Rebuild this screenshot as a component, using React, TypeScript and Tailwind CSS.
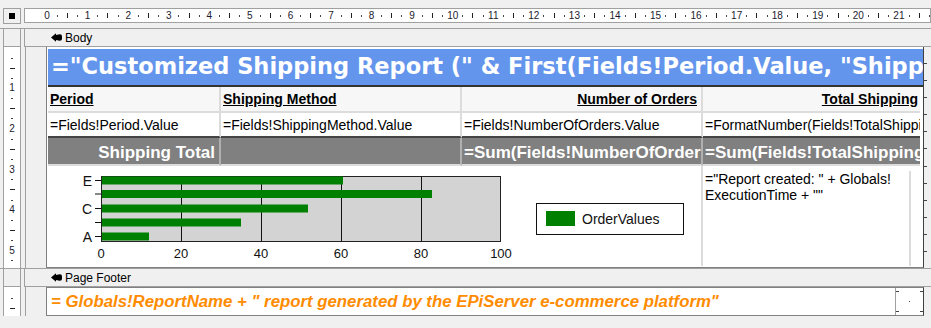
import React from 'react'

type Mark = { kind: 'num' | 'dot' | 'tick'; label?: number }

const topMarks: Mark[] = []
for (let n = 0; n <= 22; n++) {
  topMarks.push({ kind: 'num', label: n }, { kind: 'dot' }, { kind: 'tick' }, { kind: 'dot' })
}

const sideMarks: Mark[] = []
for (let n = 0; n <= 5; n++) {
  if (n > 0) sideMarks.push({ kind: 'num', label: n })
  sideMarks.push({ kind: 'dot' }, { kind: 'tick' }, { kind: 'dot' })
}

function TopMark({ kind, label }: Mark) {
  return (
    <div className="flex h-full w-[10.15px] shrink-0 items-center justify-center">
      {kind === 'num' && <span className="text-[10px] leading-none text-[#1a1a2e]">{label}</span>}
      {kind === 'dot' && <span className="h-[2px] w-px bg-[#444]" />}
      {kind === 'tick' && <span className="h-[5px] w-px bg-[#222]" />}
    </div>
  )
}

function SideMark({ kind, label }: Mark) {
  return (
    <div className="flex h-[10.15px] w-full shrink-0 items-center justify-center">
      {kind === 'num' && <span className="text-[10px] leading-none text-[#1a1a2e]">{label}</span>}
      {kind === 'dot' && <span className="h-px w-[2px] bg-[#444]" />}
      {kind === 'tick' && <span className="h-px w-[5px] bg-[#222]" />}
    </div>
  )
}

function SectionIcon() {
  return (
    <svg width="11" height="9" viewBox="0 0 11 9" className="mr-[3px]">
      <path d="M0 4.5 L5 0.3 L5 2 L8.6 1.2 Q11 1 11 3.2 L11 5.8 Q11 8 8.6 7.8 L5 7 L5 8.7 Z" fill="#000" />
    </svg>
  )
}

function SectionHeader({ title }: { title: string }) {
  return (
    <div className="flex h-[19px] border-t border-[#a0a0a0]">
      <div className="ml-[3px] w-[18px] border-x border-b border-[#a0a0a0] bg-[#f0f0f0]" />
      <div className="ml-[3px] flex flex-1 items-center border-l border-b border-[#a0a0a0] bg-[#f0f0f0] pl-[26px] text-[12px] text-black">
        <SectionIcon />
        {title}
      </div>
    </div>
  )
}

const bars = [
  { y: 10.5, w: 241 },
  { y: 24, w: 330 },
  { y: 38.5, w: 206 },
  { y: 52.5, w: 139 },
  { y: 66.5, w: 47 },
]

function OrderChart() {
  return (
    <svg width="655" height="101" viewBox="0 0 655 101" className="block">
      <rect x="53.5" y="10.5" width="399" height="65" fill="#d3d3d3" stroke="#222" />
      {[133.5, 213.5, 293.5, 373.5].map((x) => (
        <line key={x} x1={x} y1="10.5" x2={x} y2="75.5" stroke="#111" />
      ))}
      {bars.map((b) => (
        <rect key={b.y} x="54" y={b.y} width={b.w} height="8" fill="#008000" />
      ))}
      {bars.map((b) => (
        <line key={'t' + b.y} x1="47" y1={b.y + 4} x2="53" y2={b.y + 4} stroke="#111" />
      ))}
      {[
        ['E', 14.5],
        ['C', 42.5],
        ['A', 70.5],
      ].map(([l, y]) => (
        <text key={l} x="44" y={Number(y) + 5} textAnchor="end" fontSize="14" fill="#111" fontFamily="Liberation Sans, Arial, sans-serif">
          {l}
        </text>
      ))}
      {[0, 20, 40, 60, 80, 100].map((v, i) => (
        <text key={v} x={53 + i * 80} y="92" textAnchor="middle" fontSize="13" fill="#111" fontFamily="Liberation Sans, Arial, sans-serif">
          {v}
        </text>
      ))}
      <rect x="488.5" y="37.5" width="147" height="31" fill="#fff" stroke="#111" />
      <rect x="498" y="45" width="29" height="15" fill="#008000" />
      <text x="534" y="58" fontSize="14" fill="#111" fontFamily="Liberation Sans, Arial, sans-serif">
        OrderValues
      </text>
    </svg>
  )
}

export default function App() {
  return (
    <div className="h-[328px] w-[931px] overflow-hidden bg-[#f0f0f0] font-['Liberation_Sans',Arial,sans-serif] text-black">
      {/* ruler */}
      <div className="flex pt-[8px]">
        <div className="ml-[3px] flex h-[16px] w-[18px] items-center justify-center border border-[#a0a0a0] bg-[#f0f0f0]">
          <span className="h-[6px] w-[6px] bg-black" />
        </div>
        <div className="ml-[3px] flex h-[15px] flex-1 overflow-hidden border border-[#a0a0a0] bg-white pl-[17px]">
          {topMarks.map((m, i) => (
            <TopMark key={i} {...m} />
          ))}
        </div>
      </div>

      <div className="mt-[4px]">
        <SectionHeader title="Body" />
      </div>

      {/* body */}
      <div className="flex h-[221px]">
        <div className="ml-[3px] flex w-[18px] flex-col overflow-hidden border-x border-[#a0a0a0] bg-white pt-[6px]">
          {sideMarks.map((m, i) => (
            <SideMark key={i} {...m} />
          ))}
        </div>
        <div className="ml-[4px] w-[21px] border-l border-[#a0a0a0]" />
        <div className="flex w-[878px] flex-col border-l border-r border-b border-[#808080] border-r-[#404040] bg-white pl-px pt-[2px]">
          <div className="flex h-[38px] w-[875px] items-center overflow-hidden whitespace-nowrap border-b-2 border-[#333] bg-[#6495ed] pl-[3px] font-['DejaVu_Sans',Verdana,sans-serif] text-[22.5px] font-bold text-white">
            ="Customized Shipping Report (" &amp; First(Fields!Period.Value, "Shipping Method")
          </div>
          <div className="grid w-[872px] grid-cols-[173px_241px_241px_217px] text-[14px]">
            {/* header row */}
            <div className="flex h-[26px] items-center border-r-2 border-b-2 border-[#dcdcdc] bg-[#f7f7f7] pl-[2px] pt-px text-[14px] font-bold underline">Period</div>
            <div className="flex h-[26px] items-center border-r-2 border-b-2 border-[#dcdcdc] bg-[#f7f7f7] pl-[2px] pt-px text-[14px] font-bold underline">Shipping Method</div>
            <div className="flex h-[26px] items-center justify-end border-r-2 border-b-2 border-[#dcdcdc] bg-[#f7f7f7] pr-[4px] pt-px text-[14px] font-bold underline">Number of Orders</div>
            <div className="flex h-[26px] items-center justify-end border-b-2 border-[#dcdcdc] bg-[#f7f7f7] pr-[2px] pt-px text-[14px] font-bold underline">Total Shipping</div>
            {/* detail row */}
            <div className="flex h-[25px] items-center overflow-hidden whitespace-nowrap border-r-2 border-b-2 border-[#dcdcdc] border-b-[#444] pl-[2px] pt-[2px]">=Fields!Period.Value</div>
            <div className="flex h-[25px] items-center overflow-hidden whitespace-nowrap border-r-2 border-b-2 border-[#dcdcdc] border-b-[#444] pl-[2px] pt-[2px]">=Fields!ShippingMethod.Value</div>
            <div className="flex h-[25px] items-center overflow-hidden whitespace-nowrap border-r-2 border-b-2 border-[#dcdcdc] border-b-[#444] pl-[2px] pt-[2px]">=Fields!NumberOfOrders.Value</div>
            <div className="flex h-[25px] items-center overflow-hidden whitespace-nowrap border-b-2 border-[#444] pl-[2px] pt-[2px]">=FormatNumber(Fields!TotalShipping.Value, 2)</div>
            {/* total row */}
            <div className="flex h-[28px] items-center justify-end overflow-hidden whitespace-nowrap border-r-2 border-b-2 border-[#b0b0b0] border-b-[#dcdcdc] bg-[#808080] pr-[4px] pt-[3px] text-[17px] font-bold text-white">Shipping Total</div>
            <div className="h-[28px] border-r-2 border-b-2 border-[#b0b0b0] border-b-[#dcdcdc] bg-[#808080]" />
            <div className="flex h-[28px] items-center overflow-hidden whitespace-nowrap border-r-2 border-b-2 border-[#b0b0b0] border-b-[#dcdcdc] bg-[#808080] pl-[2px] pt-[3px] text-[17px] font-bold text-white">=Sum(Fields!NumberOfOrders.Value)</div>
            <div className="flex h-[28px] items-center overflow-hidden whitespace-nowrap border-b-2 border-[#dcdcdc] bg-[#808080] pl-[2px] pt-[3px] text-[17px] font-bold text-white">=Sum(Fields!TotalShipping.Value)</div>
            {/* chart row */}
            <div className="col-span-3 h-[100px] border-r-2 border-[#dcdcdc]">
              <OrderChart />
            </div>
            <div className="h-[100px] pl-[2px] pt-[5px]">
              <div className="h-full w-[206px] border-r-2 border-[#dcdcdc] text-[14px] leading-[16px]">
                ="Report created: " + Globals!
                <br />
                ExecutionTime + ""
              </div>
            </div>
          </div>
        </div>
        <div className="flex w-[6px] flex-col justify-around py-[8px]">
          {[0, 1, 2, 3, 4, 5, 6, 7, 8, 9, 10, 11].map((i) => (
            <span key={i} className="h-px w-[3px] bg-[#444]" />
          ))}
        </div>
      </div>

      <SectionHeader title="Page Footer" />

      {/* footer */}
      <div className="flex h-[29px]">
        <div className="ml-[3px] flex w-[18px] flex-col overflow-hidden border-x border-[#a0a0a0] bg-white pt-[6px]">
          <SideMark kind="dot" />
          <SideMark kind="tick" />
          <SideMark kind="dot" />
        </div>
        <div className="ml-[4px] w-[21px] border-l border-[#a0a0a0]" />
        <div className="flex w-[878px] border border-[#808080] border-r-[#404040] bg-white">
          <div className="flex flex-1 items-center whitespace-nowrap pl-[4px] text-[16.8px] font-bold italic text-[#ff8c00]">
            = Globals!ReportName + " report generated by the EPiServer e-commerce platform"
          </div>
          <div className="flex w-[28px] flex-col justify-between border-l border-[#a0a0a0] py-[3px]">
            <div className="flex justify-between">
              <span className="h-px w-[3px] bg-[#444]" />
              <span className="h-px w-[3px] bg-[#444]" />
            </div>
            <div className="flex justify-center">
              <span className="h-px w-px bg-[#444]" />
            </div>
            <div className="flex justify-between">
              <span className="h-px w-[3px] bg-[#444]" />
              <span className="h-px w-[3px] bg-[#444]" />
            </div>
          </div>
        </div>
      </div>
    </div>
  )
}
